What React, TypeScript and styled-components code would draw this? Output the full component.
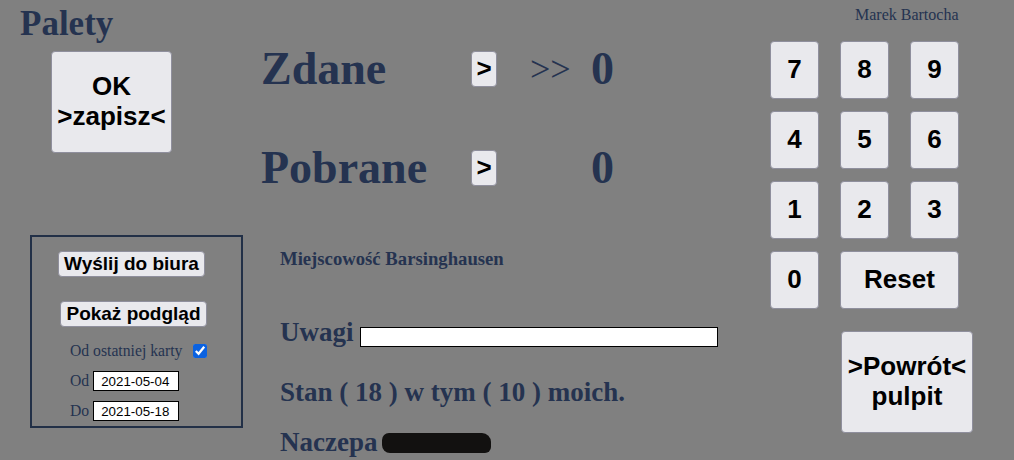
import React from "react";
import styled, { createGlobalStyle } from "styled-components";

const GlobalStyle = createGlobalStyle`
  html, body {
    margin: 0;
    padding: 0;
    background: #808080;
  }
  body {
    font-family: "Liberation Serif", "Times New Roman", serif;
    color: #253350;
  }
`;

const Page = styled.div`
  display: flex;
  align-items: flex-start;
  width: 1014px;
  height: 460px;
  overflow: hidden;
`;

const LeftColumn = styled.div`
  width: 261px;
  flex: none;
  display: flex;
  flex-direction: column;
  align-items: flex-start;
`;

const Title = styled.h1`
  margin: 4px 0 0 20px;
  font-size: 35px;
  line-height: 40px;
  font-weight: bold;
`;

const Button = styled.button<{ $w?: number; $h?: number; $fs?: number }>`
  box-sizing: border-box;
  width: ${(p) => (p.$w ? `${p.$w}px` : "auto")};
  height: ${(p) => (p.$h ? `${p.$h}px` : "auto")};
  background: #e9e9ed;
  border: 1px solid #8f8f9d;
  border-radius: 4px;
  color: #000;
  font-family: "Liberation Sans", Arial, sans-serif;
  font-weight: bold;
  font-size: ${(p) => p.$fs ?? 26}px;
  line-height: 1.15;
  padding: 0 4px;
  display: flex;
  align-items: center;
  justify-content: center;
  text-align: center;
  cursor: pointer;
`;

const BigButton = styled(Button)<{ $ml: number; $mt: number }>`
  margin: ${(p) => p.$mt}px 0 0 ${(p) => p.$ml}px;
`;

const SendBox = styled.div`
  box-sizing: border-box;
  margin: 82px 0 0 30px;
  width: 213px;
  height: 193px;
  border: 2px solid #223047;
  padding-top: 14px;
  display: flex;
  flex-direction: column;
  align-items: flex-start;
`;

const BoxButton = styled(Button)<{ $ml: number; $mt?: number }>`
  margin: ${(p) => p.$mt ?? 0}px 0 0 ${(p) => p.$ml}px;
  width: 147px;
  height: 26px;
  font-size: 19px;
  padding: 0;
`;

const FormRow = styled.label<{ $mt: number }>`
  display: flex;
  align-items: center;
  margin: ${(p) => p.$mt}px 0 0 38px;
  font-size: 15.7px;
  line-height: 20px;
  height: 20px;
  gap: 4px;
`;

const Check = styled.input`
  width: 14px;
  height: 14px;
  margin: 0 0 0 7px;
  accent-color: #0b62e0;
`;

const DateInput = styled.input`
  box-sizing: border-box;
  width: 86px;
  height: 20px;
  border: 1px solid #000;
  background: #fff;
  padding: 0 7px;
  font-family: "Liberation Sans", Arial, sans-serif;
  font-size: 13.33px;
  color: #000;
  outline: none;
`;

const MiddleColumn = styled.div`
  width: 509px;
  flex: none;
  display: flex;
  flex-direction: column;
`;

const CountRow = styled.div<{ $mt: number }>`
  display: grid;
  grid-template-columns: 210px 26px 94px auto;
  align-items: center;
  height: 36px;
  margin-top: ${(p) => p.$mt}px;
  font-size: 46px;
  line-height: 36px;
  font-weight: bold;
`;

const SmallButton = styled(Button)`
  width: 26px;
  height: 36px;
  font-size: 26px;
  padding: 0;
`;

const Arrows = styled.span`
  font-weight: normal;
  font-size: 36px;
  padding-left: 33px;
`;

const Count = styled.span`
  padding-left: 0;
`;

const Info = styled.div`
  padding-left: 19px;
  display: flex;
  flex-direction: column;
  font-weight: bold;
`;

const Place = styled.div`
  margin-top: 62px;
  font-size: 18.7px;
  line-height: 22px;
`;

const InfoLine = styled.div<{ $mt: number }>`
  margin-top: ${(p) => p.$mt}px;
  font-size: 27px;
  line-height: 30px;
  display: flex;
  align-items: baseline;
  white-space: nowrap;
`;

const NoteInput = styled.input`
  box-sizing: border-box;
  margin-left: 6px;
  width: 358px;
  height: 20px;
  border: 1px solid #000;
  background: #fff;
  font-family: "Liberation Sans", Arial, sans-serif;
  font-size: 13.33px;
  outline: none;
`;

const Redacted = styled.span`
  display: inline-block;
  margin-left: 5px;
  width: 109px;
  height: 20px;
  background: #121110;
  border-radius: 7px 9px 6px 8px;
  filter: blur(0.6px);
  align-self: center;
  transform: translateY(1px);
`;

const RightColumn = styled.div`
  flex: none;
  display: flex;
  flex-direction: column;
  align-items: flex-start;
`;

const UserName = styled.div`
  margin: 6px 0 0 85px;
  font-size: 16px;
  line-height: 18px;
`;

const Keypad = styled.div`
  margin-top: 17px;
  display: grid;
  grid-template-columns: repeat(3, 49px);
  grid-auto-rows: 58px;
  column-gap: 21px;
  row-gap: 12px;
`;

const Key = styled(Button)<{ $span?: number }>`
  width: 100%;
  height: 100%;
  padding: 0;
  grid-column: span ${(p) => p.$span ?? 1};
`;

const keys = ["7", "8", "9", "4", "5", "6", "1", "2", "3", "0"];

export default function App() {
  return (
    <>
      <GlobalStyle />
      <Page>
        <LeftColumn>
          <Title>Palety</Title>
          <BigButton $w={121} $h={102} $ml={51} $mt={7}>
            OK
            <br />
            &gt;zapisz&lt;
          </BigButton>
          <SendBox>
            <BoxButton $ml={26}>Wyślij do biura</BoxButton>
            <BoxButton $ml={28} $mt={24}>
              Pokaż podgląd
            </BoxButton>
            <FormRow $mt={14}>
              Od ostatniej karty
              <Check type="checkbox" defaultChecked />
            </FormRow>
            <FormRow $mt={10}>
              Od
              <DateInput type="text" defaultValue="2021-05-04" />
            </FormRow>
            <FormRow $mt={10}>
              Do
              <DateInput type="text" defaultValue="2021-05-18" />
            </FormRow>
          </SendBox>
        </LeftColumn>

        <MiddleColumn>
          <CountRow $mt={51}>
            <span>Zdane</span>
            <SmallButton>&gt;</SmallButton>
            <Arrows>&gt;&gt;</Arrows>
            <Count>0</Count>
          </CountRow>
          <CountRow $mt={63}>
            <span>Pobrane</span>
            <SmallButton>&gt;</SmallButton>
            <Arrows />
            <Count>0</Count>
          </CountRow>
          <Info>
            <Place>Miejscowość Barsinghausen</Place>
            <InfoLine $mt={47}>
              Uwagi
              <NoteInput type="text" />
            </InfoLine>
            <InfoLine $mt={30}>Stan ( 18 ) w tym ( 10 ) moich.</InfoLine>
            <InfoLine $mt={20}>
              Naczepa
              <Redacted />
            </InfoLine>
          </Info>
        </MiddleColumn>

        <RightColumn>
          <UserName>Marek Bartocha</UserName>
          <Keypad>
            {keys.map((k) => (
              <Key key={k}>{k}</Key>
            ))}
            <Key $span={2}>Reset</Key>
          </Keypad>
          <BigButton $w={132} $h={102} $ml={71} $mt={22}>
            &gt;Powrót&lt;
            <br />
            pulpit
          </BigButton>
        </RightColumn>
      </Page>
    </>
  );
}
